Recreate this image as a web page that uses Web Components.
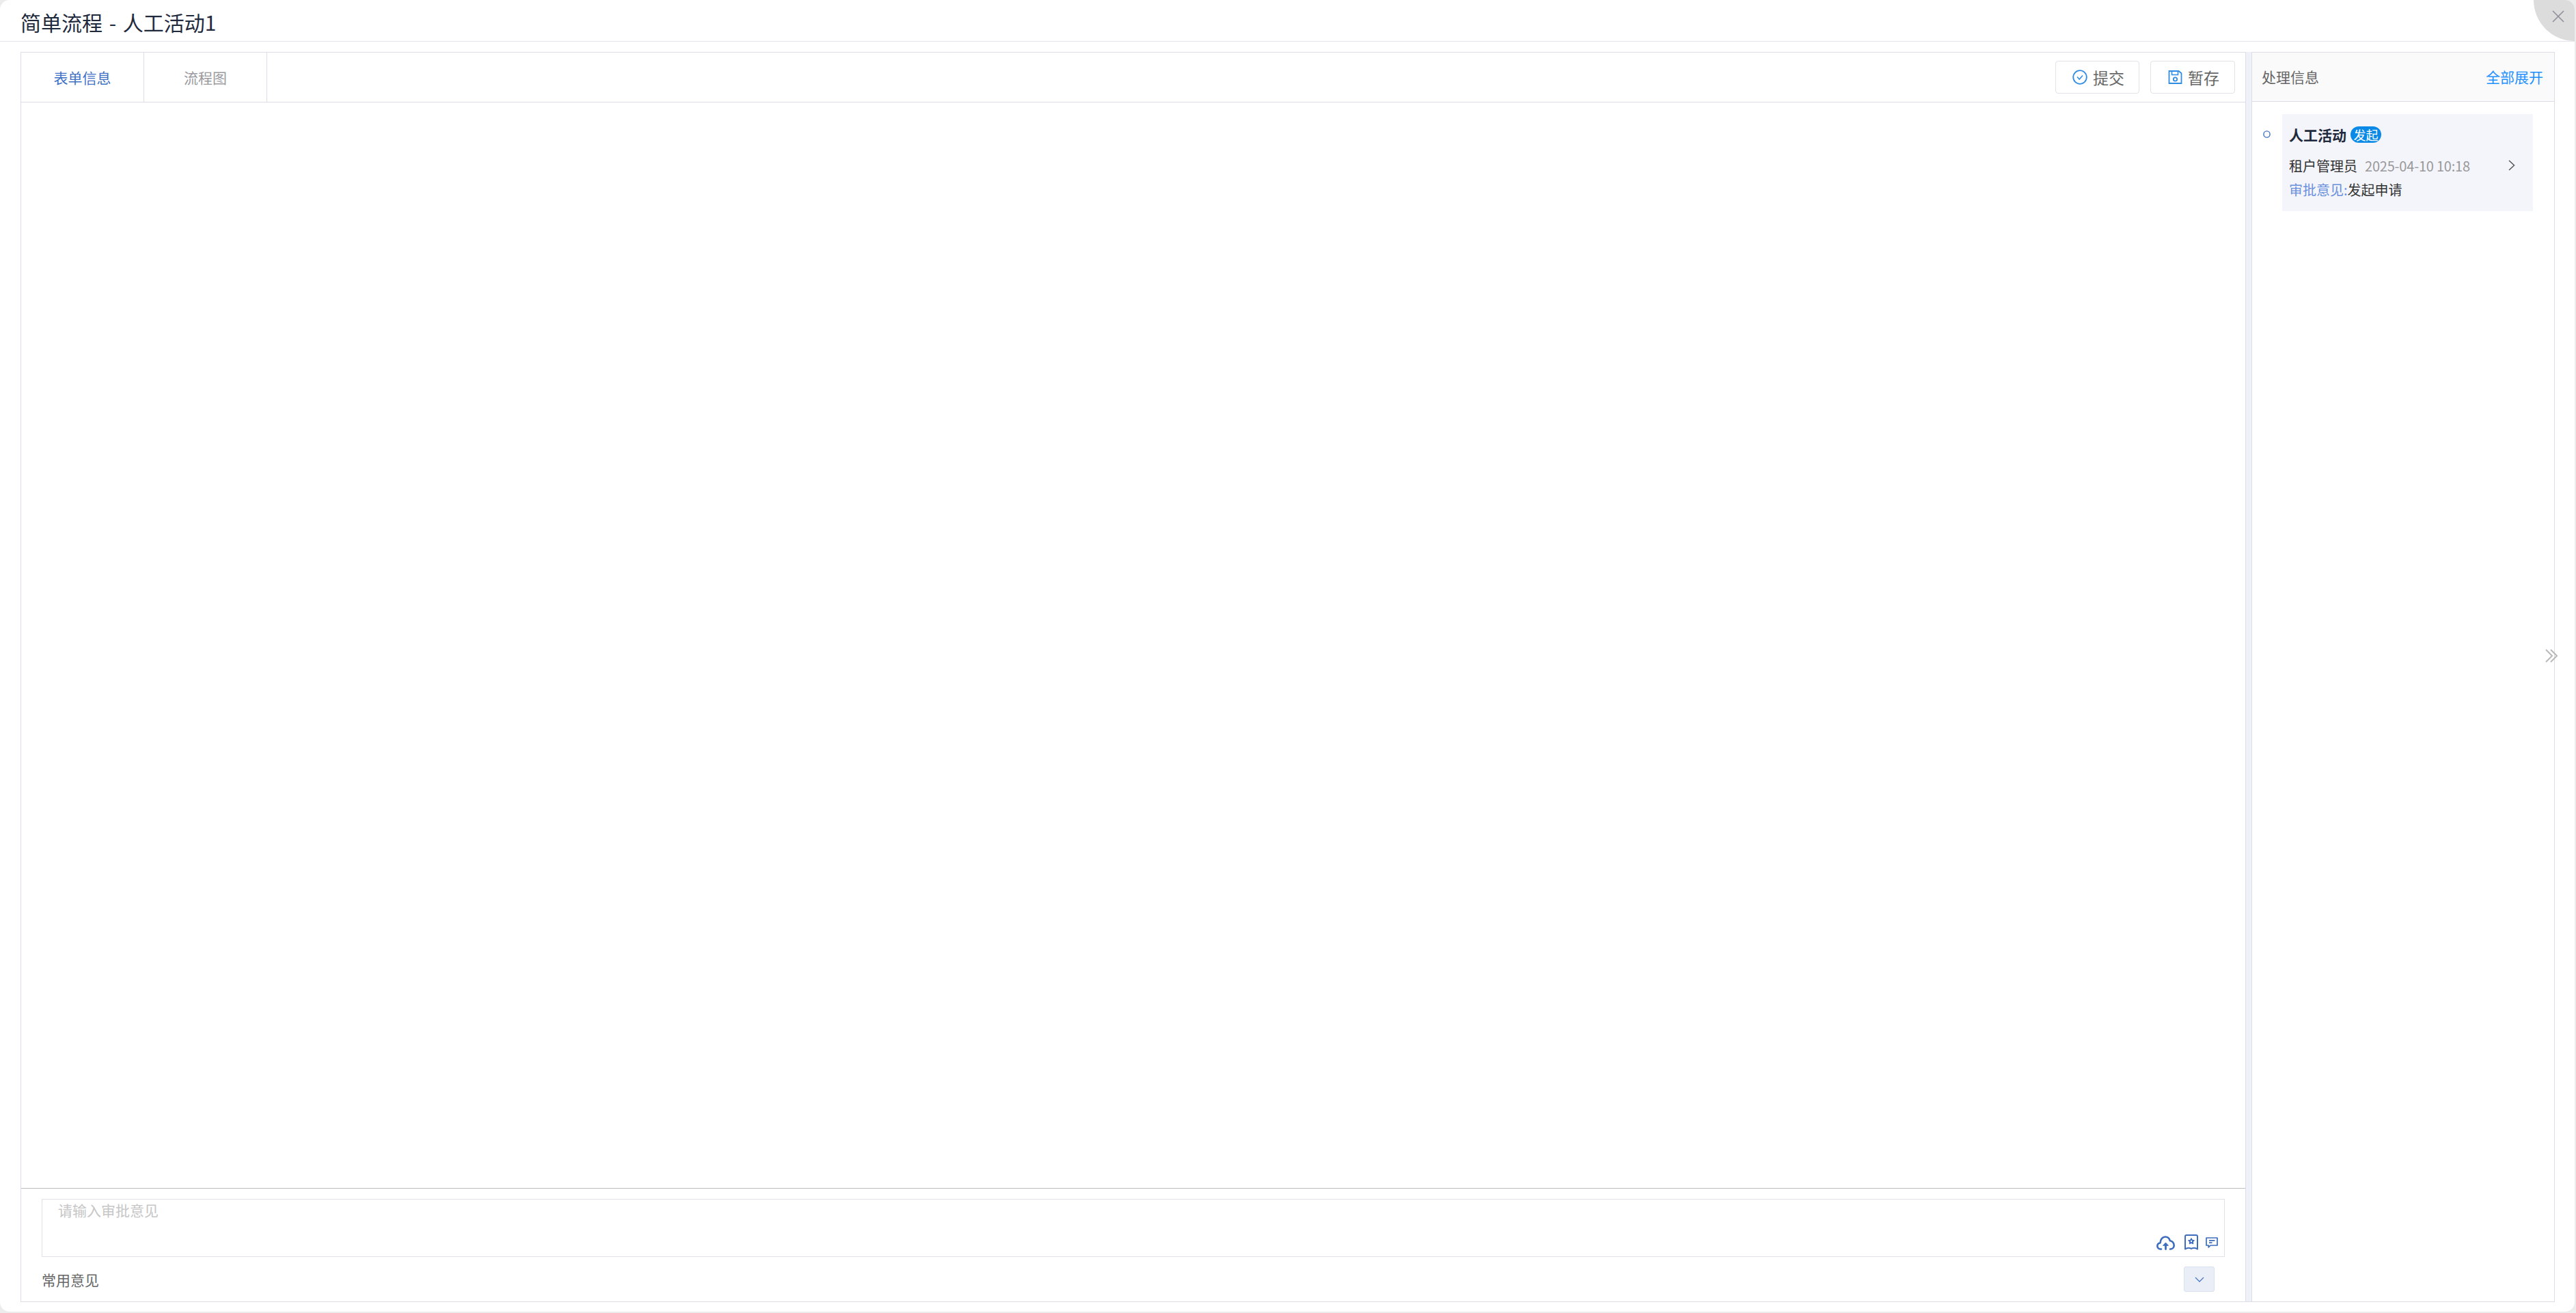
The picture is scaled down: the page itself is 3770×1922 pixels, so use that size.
<!DOCTYPE html>
<html lang="zh">
<head>
<meta charset="utf-8">
<title>简单流程 - 人工活动1</title>
<style>
  html,body{margin:0;height:100%;background:#ececec;}
  body{font-family:"Noto Sans CJK SC","Noto Sans",sans-serif;overflow:hidden;}
</style>
</head>
<body>
<flow-dialog heading="简单流程 - 人工活动1">
  <flow-form slot="main">
    <flow-tab slot="tabs" active>表单信息</flow-tab>
    <flow-tab slot="tabs">流程图</flow-tab>
    <flow-button slot="actions" icon="check">提交</flow-button>
    <flow-button slot="actions" icon="save">暂存</flow-button>
    <flow-opinion slot="footer"></flow-opinion>
  </flow-form>
  <flow-process slot="side">
    <flow-step name="人工活动" tag="发起" user="租户管理员" time="2025-04-10 10:18" label="审批意见:" note="发起申请"></flow-step>
  </flow-process>
</flow-dialog>

<script>
class FlowDialog extends HTMLElement{
    constructor(){
        super()
        this.attachShadow({mode:'open'});
    }
    connectedCallback(){
        this.shadowRoot.innerHTML=`
        <style>
          :host{
            display:flex;
            flex-direction:column;
            position:relative;
            width:3768px;
            height:1920px;
            background:#fff;
            border-radius:14px;
            overflow:hidden;
            --line:#dddde8;
          }
          header{
            height:60px;
            flex:none;
            box-sizing:border-box;
            padding:3px 0 0 30px;
            display:flex;
            align-items:center;
            font-size:30px;
            line-height:36px;
            word-spacing:3px;
            color:#1f2a3d;
          }
          .rule{height:1px;flex:none;background:#e4e4ea;}
          .body{
            flex:none;
            height:1829px;
            margin:15px 29px 0 30px;
            display:flex;
            border-bottom:1px solid var(--line);
          }
          .gutter{width:8px;flex:none;background:#eff1f8;}
          ::slotted([slot=main]){flex:1;min-width:0;}
          ::slotted([slot=side]){width:444px;flex:none;}
          .close{
            position:absolute;
            top:0;
            right:0;
            width:60px;
            height:60px;
            background:#dcdcdc;
            border-bottom-left-radius:60px;
          }
          .close svg{position:absolute;left:27px;top:15px;}
          .expand{position:absolute;left:3725px;top:950px;}
        </style>
        <header>${this.getAttribute('heading')}</header>
        <div class="rule"></div>
        <div class="body">
          <slot name="main"></slot>
          <div class="gutter"></div>
          <slot name="side"></slot>
        </div>
        <div class="close">
          <svg width="18" height="18" viewBox="0 0 18 18" fill="none" stroke="#8f8f9a" stroke-width="1.6"><path d="M1 1l16 16M17 1L1 17"/></svg>
        </div>
        <svg class="expand" width="18" height="20" viewBox="0 0 18 20" fill="none" stroke="#b9b9b9" stroke-width="2"><path d="M1 1l9 9-9 9M8 1l9 9-9 9"/></svg>
        `;
    }
}

class FlowForm extends HTMLElement{
    constructor(){
        super()
        this.attachShadow({mode:'open'});
    }
    connectedCallback(){
        this.shadowRoot.innerHTML=`
        <style>
          :host{
            display:flex;
            flex-direction:column;
            box-sizing:border-box;
            border:1px solid var(--line);
            border-bottom:none;
          }
          .bar{
            height:73px;
            flex:none;
            box-sizing:border-box;
            display:flex;
            align-items:center;
            border-bottom:1px solid var(--line);
            padding-right:15px;
          }
          .tabs{display:flex;height:100%;}
          .actions{display:flex;gap:16px;margin-left:auto;margin-top:-1px;}
          .content{flex:1;}
        </style>
        <div class="bar">
          <div class="tabs"><slot name="tabs"></slot></div>
          <div class="actions"><slot name="actions"></slot></div>
        </div>
        <div class="content"></div>
        <slot name="footer"></slot>
        `;
    }
}

class FlowTab extends HTMLElement{
    constructor(){
        super()
        this.attachShadow({mode:'open'});
    }
    connectedCallback(){
        this.shadowRoot.innerHTML=`
        <style>
          :host{
            display:flex;
            align-items:center;
            justify-content:center;
            box-sizing:border-box;
            width:180px;
            height:100%;
            border-right:1px solid var(--line);
            font-size:21px;
            color:#9a9a9f;
          }
          :host([active]){color:#3f71c4;}
        </style>
        <slot></slot>
        `;
    }
}

class FlowButton extends HTMLElement{
    constructor(){
        super()
        this.attachShadow({mode:'open'});
    }
    getIcon(){
        if(this.getAttribute('icon')==='check'){
            return `<svg width="22" height="22" viewBox="0 0 22 22" fill="none" stroke="#2f8de4" stroke-width="1.8"><circle cx="11" cy="11" r="9.8"/><path d="M7 10.5l3.2 3.6L15 8.4" stroke-width="1.5"/></svg>`;
        }
        return `<svg width="21" height="22" viewBox="0 0 21 22" fill="none" stroke="#2f8de4" stroke-width="1.8"><path d="M1.500 2h14l4 3.200V20h-18z"/><path d="M5.500 2.500v5h9v-5" stroke-width="1.600"/><circle cx="10.500" cy="14" r="2.700"/></svg>`;
    }
    connectedCallback(){
        this.shadowRoot.innerHTML=`
        <style>
          :host{
            display:flex;
            align-items:center;
            gap:8px;
            box-sizing:border-box;
            height:48px;
            padding:0 21px 0 24px;
            border:1px solid #e2e2e8;
            border-radius:4px;
            background:#fff;
            font-size:23px;
            color:#666;
          }
          :host([icon=save]){padding:0 22px 0 25px;}
          svg{display:block;}
        </style>
        ${this.getIcon()}
        <slot></slot>
        `;
    }
}

class FlowOpinion extends HTMLElement{
    constructor(){
        super()
        this.attachShadow({mode:'open'});
    }
    connectedCallback(){
        this.shadowRoot.innerHTML=`
        <style>
          :host{
            display:block;
            flex:none;
            box-sizing:border-box;
            height:166px;
            border-top:1px solid #bebec2;
            padding:15px 30px 0 30px;
          }
          .input{
            display:flex;
            flex-direction:column;
            box-sizing:border-box;
            height:85px;
            border:1px solid #e0e0e9;
            padding:0 9px 9px 23px;
          }
          .holder{font-size:21px;line-height:30px;color:#c6c6c6;}
          .tools{display:flex;align-items:center;justify-content:flex-end;margin-top:auto;}
          .tools svg{display:block;}
          .cloud{margin-right:14px;margin-top:2px;}
          .mark{margin-right:11px;}
          .common{
            display:flex;
            align-items:center;
            justify-content:space-between;
            padding:14px 15px 0 0;
            font-size:21px;
            color:#666;
          }
          .pick{
            display:flex;
            align-items:center;
            justify-content:center;
            box-sizing:border-box;
            width:45px;
            height:37px;
            background:#e9eef7;
            border:1px solid #d8e1f0;
            border-radius:3px;
          }
        </style>
        <div class="input">
          <div class="holder">请输入审批意见</div>
          <div class="tools">
            <svg class="cloud" width="27" height="21" viewBox="0 0 27 21" fill="none" stroke="#3d6dbc" stroke-width="2.600" stroke-linecap="round" stroke-linejoin="round"><path d="M7 19.500H6C3 19.500 1.300 17.500 1.300 15S3 10.700 5.500 10.500C5.800 5 9 1.500 13 1.500c3.500 0 6 2.500 6.800 5.700 3.200.3 5.900 3.300 5.900 6.800s-2.700 5.500-5.700 5.500"/><path d="M13.500 19.500v-6" stroke-width="2.800"/><path d="M9.800 14l3.700-4 3.700 4z" fill="#3d6dbc" stroke-width="1"/></svg>
            <svg class="mark" width="20" height="23" viewBox="0 0 20 23" fill="none" stroke="#3d6dbc" stroke-width="2" stroke-linejoin="round"><path d="M3 1h14a2 2 0 0 1 2 2v18.500c-3-2.200-6-2.200-9-.6-3-1.600-6-1.600-9 .6V3a2 2 0 0 1 2-2z"/><path d="M10 5.500l1.500 2.700 3 .5-2.100 2.200.4 3-2.800-1.300-2.800 1.300.4-3-2.100-2.200 3-.5z" fill="#3d6dbc" stroke-width="1"/><circle cx="10" cy="10" r="1.200" fill="#fff" stroke="none"/></svg>
            <svg width="18" height="16" viewBox="0 0 18 16" fill="none" stroke="#3d6dbc" stroke-width="1.700" stroke-linejoin="round"><path d="M1 1h16v11H7l-2.800 2.800V12H1z"/><path d="M5 4.800h8.500M5 8.200h4.500"/></svg>
          </div>
        </div>
        <div class="common">
          <span>常用意见</span>
          <div class="pick">
            <svg width="14" height="8" viewBox="0 0 14 8" fill="none" stroke="#4d78c4" stroke-width="1.300"><path d="M1 1l6 6 6-6"/></svg>
          </div>
        </div>
        `;
    }
}

class FlowProcess extends HTMLElement{
    constructor(){
        super()
        this.attachShadow({mode:'open'});
    }
    connectedCallback(){
        this.shadowRoot.innerHTML=`
        <style>
          :host{
            display:block;
            box-sizing:border-box;
            border:1px solid var(--line);
            border-bottom:none;
          }
          .head{
            display:flex;
            align-items:center;
            justify-content:space-between;
            box-sizing:border-box;
            height:72px;
            padding:0 16px 2px 14px;
            background:#fafafa;
            border-bottom:1px solid var(--line);
            font-size:21px;
            color:#666;
          }
          .all{color:#1f90ff;}
          .list{padding:18px 31px 0 16px;}
        </style>
        <div class="head"><span>处理信息</span><span class="all">全部展开</span></div>
        <div class="list"><slot></slot></div>
        `;
    }
}

class FlowStep extends HTMLElement{
    constructor(){
        super()
        this.attachShadow({mode:'open'});
    }
    connectedCallback(){
        this.shadowRoot.innerHTML=`
        <style>
          :host{display:flex;align-items:flex-start;gap:17px;}
          .dot{flex:none;display:block;margin-top:24px;}
          .card{
            flex:1;
            box-sizing:border-box;
            height:142px;
            padding:18px 26px 0 10px;
            background:#f4f5fb;
            font-size:20px;
            color:#333;
          }
          .title{display:flex;align-items:center;gap:6px;height:24px;}
          .title b{font-size:21px;font-weight:700;color:#1f2a3d;}
          .tag{
            display:flex;
            align-items:center;
            justify-content:center;
            width:45px;
            height:24px;
            border-radius:12px;
            background:#0a8ae6;
            color:#fff;
            font-size:18px;
          }
          .who{display:flex;align-items:center;gap:11px;height:30px;margin-top:18px;}
          .who svg{margin-left:auto;display:block;}
          .time{color:#999;letter-spacing:-.2px;}
          .note{height:30px;line-height:30px;margin-top:6px;}
          .note span{color:#6a90dc;}
        </style>
        <svg class="dot" width="11" height="11" viewBox="0 0 11 11" fill="none" stroke="#3f71c4" stroke-width="1.400"><circle cx="5.500" cy="5.500" r="4.600"/></svg>
        <div class="card">
          <div class="title"><b>${this.getAttribute('name')}</b><span class="tag">${this.getAttribute('tag')}</span></div>
          <div class="who">
            <span>${this.getAttribute('user')}</span>
            <span class="time">${this.getAttribute('time')}</span>
            <svg width="10" height="16" viewBox="0 0 10 16" fill="none" stroke="#555" stroke-width="1.500"><path d="M1 1l7.500 7L1 15"/></svg>
          </div>
          <div class="note"><span>${this.getAttribute('label')}</span>${this.getAttribute('note')}</div>
        </div>
        `;
    }
}

customElements.define('flow-dialog',FlowDialog);
customElements.define('flow-form',FlowForm);
customElements.define('flow-tab',FlowTab);
customElements.define('flow-button',FlowButton);
customElements.define('flow-opinion',FlowOpinion);
customElements.define('flow-process',FlowProcess);
customElements.define('flow-step',FlowStep);
</script>
</body>
</html>
